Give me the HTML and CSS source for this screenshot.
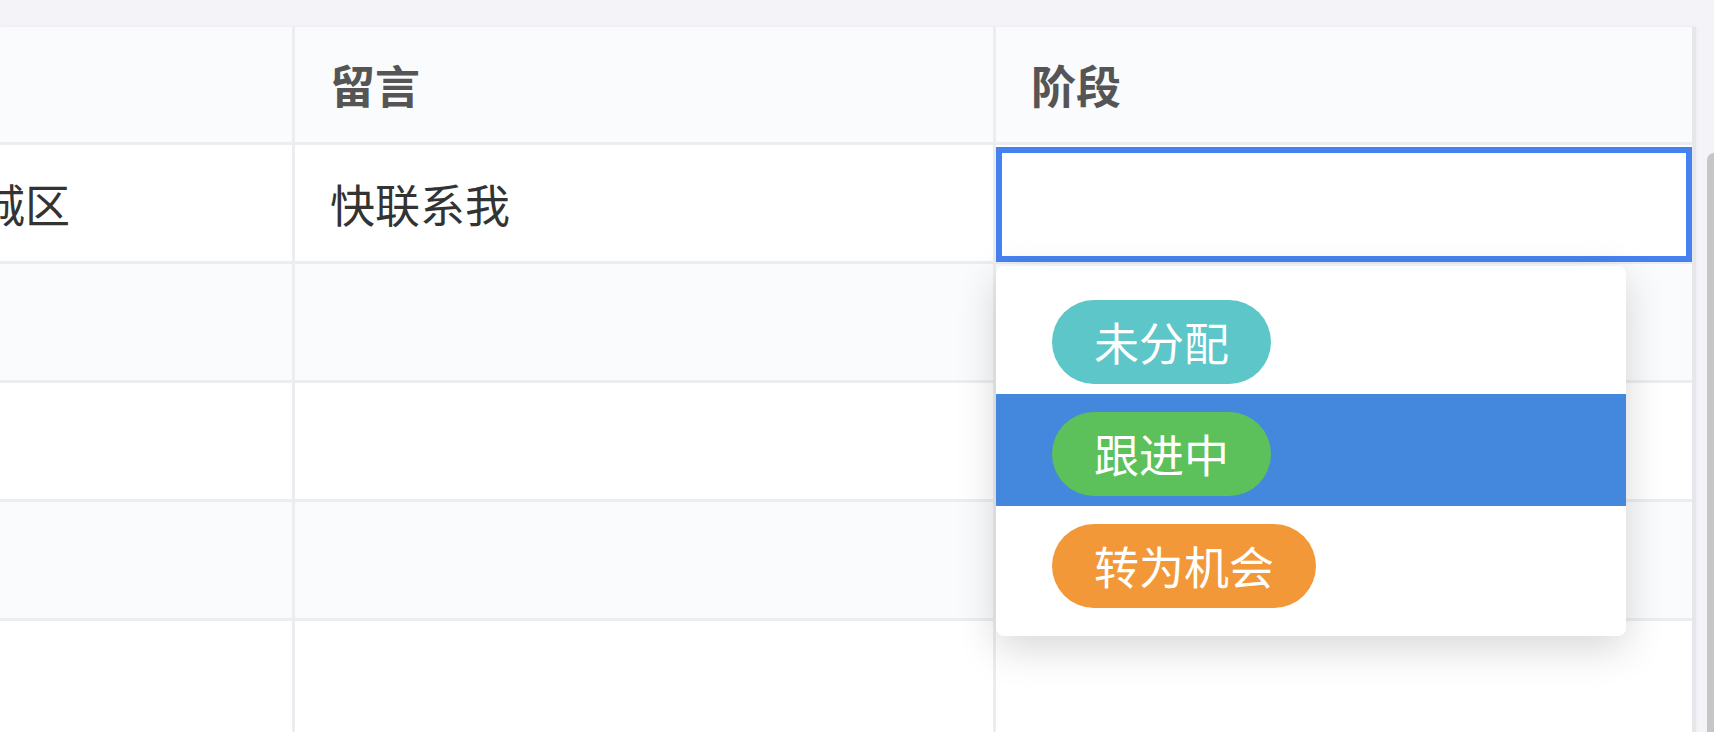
FILE: index.html
```html
<!DOCTYPE html>
<html lang="zh-CN">

<head>
    <meta charset="UTF-8">
    <meta name="viewport" content="width=device-width, initial-scale=1.0">
    <title>线索列表</title>
    <link rel="stylesheet" href="styles.css">
</head>

<body>
    <div class="top-bar"></div>

    <div class="main">
        <div class="sheet">
            <table class="grid">
                <thead>
                    <tr>
                        <th class="col-area"></th>
                        <th class="col-note">留言</th>
                        <th class="col-stage">阶段</th>
                    </tr>
                </thead>
                <tbody>
                    <tr>
                        <td>东城区</td>
                        <td>快联系我</td>
                        <td class="stage-cell">
                            <div class="cell-editor"></div>
                            <!-- dropdown for the stage picker -->
                            <ul class="stage-menu">
                                <li><span class="tag tag-new">未分配</span></li>
                                <li class="active"><span class="tag tag-follow">跟进中</span></li>
                                <li><span class="tag tag-deal">转为机会</span></li>
                            </ul>
                        </td>
                    </tr>
                    <tr class="stripe"><td></td><td></td><td></td></tr>
                    <tr><td></td><td></td><td></td></tr>
                    <tr class="stripe"><td></td><td></td><td></td></tr>
                    <tr><td></td><td></td><td></td></tr>
                </tbody>
            </table>
        </div>

        <div class="scroll-track">
            <div class="scroll-thumb"></div>
        </div>
    </div>
</body>

</html>
```

FILE: styles.css
```css
body {
    margin: 0;
    background-color: #f4f4f8;
    font-family: "Noto Sans CJK SC", "Noto Sans", sans-serif;
    overflow: hidden;
}

.top-bar {
    height: 27px;
}

.main {
    display: flex;
    align-items: flex-start;
}

.sheet {
    width: 1696px;
    flex: none;
    overflow: hidden;
    background-color: #fff;
    border-right: 4px solid #e6e6eb;
    box-sizing: border-box;
    box-shadow: 0 0 4px rgba(0, 0, 0, 0.05);
}

.grid {
    border-collapse: separate;
    border-spacing: 0;
    table-layout: fixed;
    margin-left: -100px;
    width: 1792px;
}

.grid th,
.grid td {
    padding: 0 0 0 35px;
    text-align: left;
    border-right: 3px solid #ebedf0;
    border-bottom: 3px solid #ebedf0;
    font-size: 45px;
    vertical-align: middle;
}

.grid th {
    height: 115px;
    background-color: #fafbfd;
    color: #555;
    font-weight: 700;
}

.grid td {
    height: 116px;
    color: #333;
}

.grid th:last-child,
.grid td:last-child {
    border-right: none;
}

.col-area {
    width: 357px;
}

.col-note {
    width: 663px;
}

.col-stage {
    width: 661px;
}

.stripe td {
    background-color: #fafbfd;
}

.stage-cell {
    position: relative;
}

.cell-editor {
    position: absolute;
    top: 2px;
    left: 0;
    right: 0;
    bottom: -1px;
    border: 6px solid #4682ef;
    background-color: #fff;
}

.stage-menu {
    position: absolute;
    z-index: 2;
    top: calc(100% + 5px);
    left: 0;
    width: 630px;
    margin: 0;
    padding: 16px 0 18px;
    list-style: none;
    background-color: #fff;
    border-radius: 8px;
    box-shadow: 0 12px 40px rgba(0, 0, 0, 0.16);
}

.stage-menu li {
    height: 112px;
    box-sizing: border-box;
    padding: 18px 0 10px 56px;
}

.stage-menu li.active {
    background-color: #4388dc;
}

.tag {
    display: inline-block;
    height: 84px;
    line-height: 84px;
    padding: 0 42px;
    border-radius: 42px;
    color: #fff;
    font-size: 45px;
    font-weight: 400;
}

.tag-new {
    background-color: #5cc6c8;
}

.tag-follow {
    background-color: #5cc15a;
}

.tag-deal {
    background-color: #f29839;
}

.scroll-track {
    flex: 1;
    padding: 126px 0 0 11px;
}

.scroll-thumb {
    height: 700px;
    background-color: #c6c6c6;
    border-radius: 7px 0 0 0;
}
```
